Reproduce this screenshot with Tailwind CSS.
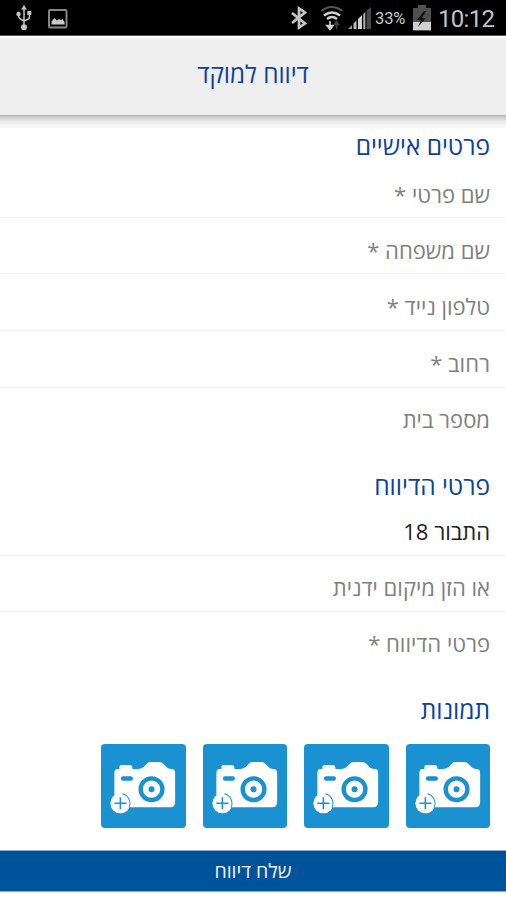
<!DOCTYPE html>
<html lang="he" dir="rtl">
<head>
<meta charset="utf-8">
<title>דיווח למוקד</title>
<script src="https://cdn.jsdelivr.net/npm/@tailwindcss/browser@4"></script>
</head>
<body class="w-[506px] h-[900px] overflow-hidden bg-white font-['Open_Sans','Noto_Sans',sans-serif] font-normal">
<svg class="hidden">
  <symbol id="camera" viewBox="0.700 0 84 84">
    <path fill="#fff" d="M17 25h2v-2q0-2 2-2h8q3 0 3 3v1h5q5 0 8-4l2-2q1-1 3-1h9q2 0 4 2l4 4q2 1 4 1 3.500 0 3.500 4v29q0 5-5 5H19q-5 0-5-5V29q0-4 3-4z"/>
    <rect x="20.500" y="32" width="12" height="4.500" rx="2.250" fill="#1a91d0"/>
    <circle cx="51" cy="45" r="10.800" fill="none" stroke="#1a91d0" stroke-width="4.400"/>
    <circle cx="51" cy="45" r="3" fill="#1a91d0"/>
    <circle cx="20" cy="59" r="10" fill="#fff"/>
    <path d="M22 49.500a10 10 0 0 1 6.500 14" fill="none" stroke="#1a91d0" stroke-width="1"/>
    <path d="M20 53v12M14 59h12" stroke="#1a91d0" stroke-width="1.600"/>
  </symbol>
</svg>

<div dir="ltr" class="h-9 bg-black flex items-center border-b border-[#555]">
  <svg class="ml-[15px] w-[18px] h-[27px]" viewBox="0 0 18 27" fill="none" stroke="#c4c4c4" stroke-width="1.500">
    <path d="M9 5v17M3.500 9v3q0 2 2 3l3.500 2 3.500-1.500q2-1 2-3V9"/>
    <path d="M9 1l3 4.500H6z" fill="#c4c4c4" stroke="none"/>
    <circle cx="3.500" cy="10" r="2.200" fill="#c4c4c4" stroke="none"/>
    <path d="M12.300 7h4v4h-4z" fill="#c4c4c4" stroke="none"/>
    <circle cx="9" cy="23.300" r="3" fill="#c4c4c4" stroke="none"/>
  </svg>
  <svg class="ml-[15px] mt-[2px] w-5 h-5" viewBox="0 0 20 20">
    <rect x="1" y="1" width="17.500" height="17.500" rx="1" fill="none" stroke="#858585" stroke-width="2"/>
    <path d="M3.500 15.500v-3l3-3.500 2.500 2.500 2-1.500 2 1 1.500-1 2 3v2.500z" fill="#c8c8c8"/>
  </svg>
  <svg class="ml-[223px] w-[17px] h-6" viewBox="0 0 17 24" fill="none" stroke="#c4c4c4" stroke-width="2.700">
    <path d="M1 7l13 10.500-6 4V2.500l6 4L1 17"/>
  </svg>
  <svg class="ml-[12px] w-6 h-[26px]" viewBox="0 0 24 26" fill="none">
    <path d="M1.500 6q10-8 21 0" stroke="#555" stroke-width="2"/>
    <path d="M4 10.500q8-6 16 0M7 14q5-4 10 0" stroke="#d0d0d0" stroke-width="2.400"/>
    <path d="M10 16v7M6.800 20.500l3.200 4 3.200-4z" stroke="#d0d0d0" stroke-width="1.600" fill="#d0d0d0"/>
    <path d="M16.500 24v-6M14.500 19.500l2-3 2 3z" stroke="#444" stroke-width="1.500" fill="#444"/>
  </svg>
  <svg class="ml-[3px] w-[25px] h-[24px]" viewBox="0 0 25 24">
    <path d="M1 23l4-4v4z" fill="#999"/><path d="M6.500 17.500l3-3V23h-3z" fill="#bbb"/><path d="M11 13l4-4v14h-4z" fill="#d0d0d0"/>
    <path d="M16.300 8l2-2v17h-2z" fill="#b5b5b5"/><path d="M19.500 4.500L24 1v22h-4.500z" fill="#484848"/>
  </svg>
  <span class="ml-[3px] w-[34px] font-[Roboto] font-normal text-[16.500px] leading-none text-[#c8c8c8] whitespace-nowrap tracking-[-0.100px] pt-[4px]">33%</span>
  <svg class="ml-[4px] w-[18px] h-[26px]" viewBox="0 0 18 26">
    <path d="M5 0h8v3h5v23H0V3h5z" fill="#505050"/>
    <path d="M0 17h18v8H0z" fill="#d0d0d0"/>
    <path d="M11 6L4 15h4l-3 7 8-9H9l4-7z" fill="#111"/>
  </svg>
  <span class="ml-[7px] font-[Roboto] font-normal text-[24px] leading-none text-[#c4c4c4] whitespace-nowrap tracking-[-0.700px] pt-[2px]">10:12</span>
</div>

<header class="h-[80px] bg-[#efefef] border-t-2 border-t-white border-b border-b-[#b5b5b5] flex justify-center pt-[18px] text-[#0c429a] text-[24.300px] leading-[36px]">
  <h1 class="whitespace-nowrap">דיווח למוקד</h1>
</header>
<div class="h-[13px] bg-linear-to-b from-[#c4c4c4] via-[#e8e8e8] via-40% to-white"></div>

<main>
  <section>
    <h2 class="h-[33px] px-4 text-[24.500px] leading-[33px] text-[#0c429a]">פרטים אישיים</h2>
    <div class="h-[56px] px-4 pt-[15px] border-b border-[#f1f1f1] text-[22px] leading-[34px] text-[#808080]">שם פרטי *</div>
    <div class="h-[56px] px-4 pt-[15px] border-b border-[#f1f1f1] text-[22px] leading-[34px] text-[#808080]">שם משפחה *</div>
    <div class="h-[57px] px-4 pt-[15px] border-b border-[#f1f1f1] text-[22px] leading-[34px] text-[#808080]">טלפון נייד *</div>
    <div class="h-[57px] px-4 pt-[15px] border-b border-[#f1f1f1] text-[22px] leading-[34px] text-[#808080]">רחוב *</div>
    <div class="h-[55px] px-4 pt-[14px] text-[22px] leading-[34px] text-[#808080]">מספר בית</div>
  </section>
  <section class="pt-[26px]">
    <h2 class="h-[30px] px-4 text-[24.500px] leading-[33px] text-[#0c429a]">פרטי הדיווח</h2>
    <div class="h-[57px] px-4 pt-[15px] border-b border-[#f1f1f1] text-[22px] leading-[34px] text-[#222]">התבור 18</div>
    <div class="h-[56px] px-4 pt-[14px] border-b border-[#f1f1f1] text-[22px] leading-[34px] text-[#808080]">או הזן מיקום ידנית</div>
    <div class="h-[55px] px-4 pt-[14px] text-[22px] leading-[34px] text-[#808080]">פרטי הדיווח *</div>
  </section>
  <section class="pt-[26px]">
    <h2 class="h-[50.500px] px-4 text-[24.500px] leading-[33px] text-[#0c429a]">תמונות</h2>
    <div class="flex gap-[17px] px-4">
      <button class="size-[84.400px] rounded-[4px] bg-[#1a91d0]"><svg class="size-full"><use href="#camera"/></svg></button>
      <button class="size-[84.400px] rounded-[4px] bg-[#1a91d0]"><svg class="size-full"><use href="#camera"/></svg></button>
      <button class="size-[84.400px] rounded-[4px] bg-[#1a91d0]"><svg class="size-full"><use href="#camera"/></svg></button>
      <button class="size-[84.400px] rounded-[4px] bg-[#1a91d0]"><svg class="size-full"><use href="#camera"/></svg></button>
    </div>
  </section>
</main>
<button class="mt-[22px] block w-full h-[42px] bg-[#00529b] border-y border-[#8eabd0] text-[#f0f4fa] text-[19.500px] leading-[38px]">שלח דיווח</button>
</body>
</html>
